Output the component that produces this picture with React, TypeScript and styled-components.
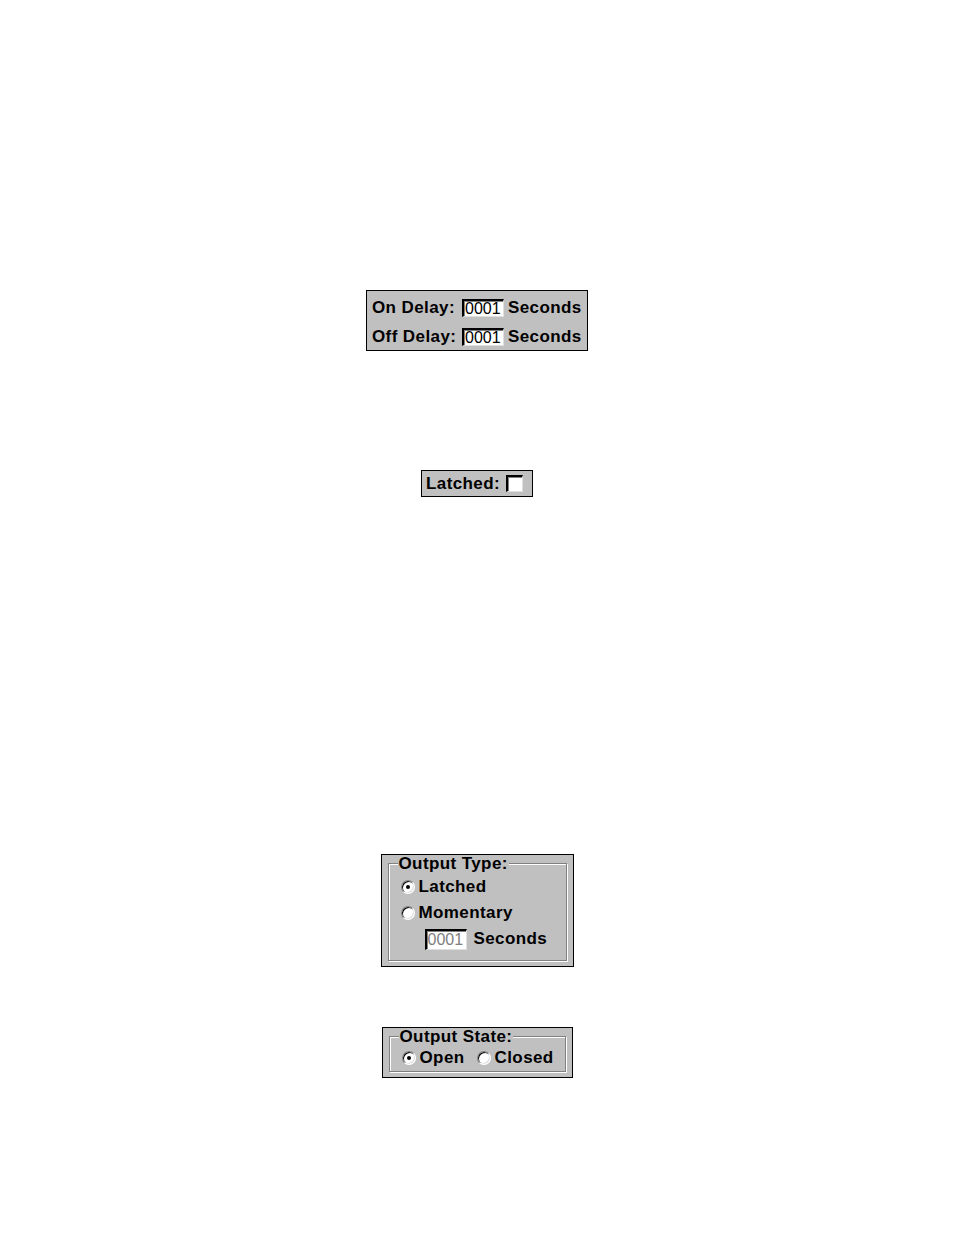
import React from 'react';
import styled, { createGlobalStyle } from 'styled-components';

const GlobalStyle = createGlobalStyle`
  body {
    margin: 0;
    background: #ffffff;
    font-family: "Liberation Sans", Arial, sans-serif;
  }
`;

const Page = styled.div`
  display: flex;
  flex-direction: column;
  align-items: center;
  min-height: 1235px;
  padding-top: 290px;
  box-sizing: border-box;
`;

const Panel = styled.div<{ $w: number; $h: number; $mt?: number }>`
  box-sizing: border-box;
  width: ${(p) => p.$w}px;
  height: ${(p) => p.$h}px;
  margin-top: ${(p) => p.$mt ?? 0}px;
  background: #c0c0c0;
  border: 1px solid #000;
  color: #000;
  font-size: 17px;
  font-weight: bold;
  letter-spacing: 0.4px;
`;

const DelayGrid = styled.div`
  display: grid;
  grid-template-columns: 86px 42px auto;
  grid-auto-rows: 29px;
  column-gap: 4px;
  align-items: center;
  padding: 2px 0 0 5px;
  white-space: nowrap;
`;

const Field = styled.div<{ $disabled?: boolean; $h?: number }>`
  box-sizing: border-box;
  width: 42px;
  height: ${(p) => p.$h ?? 18}px;
  background: #fff;
  border-style: solid;
  border-width: 2px 1px 1px 2px;
  border-color: #000 #dfdfdf #dfdfdf #000;
  box-shadow: inset 1px 1px 0 #808080;
  font-size: 16px;
  font-weight: normal;
  letter-spacing: 0;
  line-height: ${(p) => (p.$h ?? 18) - 3}px;
  padding-left: 1px;
  color: ${(p) => (p.$disabled ? '#808080' : '#000')};
`;

const LatchRow = styled.div`
  display: flex;
  align-items: center;
  gap: 6px;
  height: 100%;
  padding-left: 4px;
`;

const CheckBox = styled.span`
  box-sizing: border-box;
  width: 17px;
  height: 17px;
  background: #fff;
  border-style: solid;
  border-width: 2px 1px 1px 2px;
  border-color: #000 #dfdfdf #dfdfdf #000;
  box-shadow: inset 1px 1px 0 #808080;
`;

const Group = styled.fieldset<{ $padLeft: number }>`
  box-sizing: border-box;
  height: 100%;
  margin: 0;
  padding: 2px 0 0 ${(p) => p.$padLeft}px;
  border: 1px solid #808080;
  box-shadow: inset 1px 1px 0 #fff, 1px 1px 0 #fff;
  min-width: 0;
`;

const Legend = styled.legend`
  margin-left: -3px;
  padding: 0 1px;
  line-height: 17px;
  background: #c0c0c0;
`;

const GroupPanel = styled(Panel)`
  padding: 0 6px 5px 6px;
`;

const OptionRow = styled.div<{ $h: number; $indent?: number; $gap?: number }>`
  display: flex;
  align-items: center;
  height: ${(p) => p.$h}px;
  padding-left: ${(p) => p.$indent ?? 0}px;
  gap: ${(p) => p.$gap ?? 0}px;
  white-space: nowrap;
`;

const Option = styled.label`
  display: flex;
  align-items: center;
  gap: 4px;
`;

const Radio = styled.span<{ $on?: boolean }>`
  position: relative;
  box-sizing: border-box;
  width: 14px;
  height: 14px;
  border-radius: 50%;
  background: #fff;
  border: 1px solid;
  border-color: #808080 #fff #fff #808080;
  box-shadow: inset 1px 1px 0 #000, inset -1px -1px 0 #dfdfdf;

  &::after {
    content: '';
    display: ${(p) => (p.$on ? 'block' : 'none')};
    position: absolute;
    left: 4px;
    top: 4px;
    width: 4px;
    height: 4px;
    border-radius: 50%;
    background: #000;
  }
`;

const Seconds = styled.span`
  margin-left: 7px;
`;

export default function App() {
  return (
    <>
      <GlobalStyle />
      <Page>
        <Panel $w={222} $h={61}>
          <DelayGrid>
            <span>On Delay:</span>
            <Field>0001</Field>
            <span>Seconds</span>
            <span>Off Delay:</span>
            <Field>0001</Field>
            <span>Seconds</span>
          </DelayGrid>
        </Panel>

        <Panel $w={112} $h={27} $mt={119}>
          <LatchRow>
            <span>Latched:</span>
            <CheckBox />
          </LatchRow>
        </Panel>

        <GroupPanel $w={193} $h={113} $mt={357}>
          <Group $padLeft={12}>
            <Legend>Output Type:</Legend>
            <OptionRow $h={26}>
              <Option>
                <Radio $on />
                Latched
              </Option>
            </OptionRow>
            <OptionRow $h={26}>
              <Option>
                <Radio />
                Momentary
              </Option>
            </OptionRow>
            <OptionRow $h={26} $indent={24}>
              <Field $disabled $h={21}>0001</Field>
              <Seconds>Seconds</Seconds>
            </OptionRow>
          </Group>
        </GroupPanel>

        <GroupPanel $w={191} $h={51} $mt={60}>
          <Group $padLeft={12}>
            <Legend>Output State:</Legend>
            <OptionRow $h={22} $gap={12}>
              <Option>
                <Radio $on />
                Open
              </Option>
              <Option>
                <Radio />
                Closed
              </Option>
            </OptionRow>
          </Group>
        </GroupPanel>
      </Page>
    </>
  );
}
